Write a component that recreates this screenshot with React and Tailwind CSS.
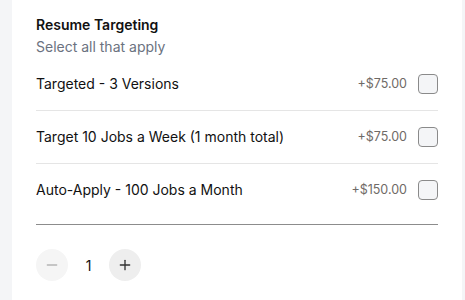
import { Minus, Plus } from "lucide-react";

const opciones = [
  { id: 1, nombre: "Targeted - 3 Versions", precio: "+$75.00" },
  { id: 2, nombre: "Target 10 Jobs a Week (1 month total)", precio: "+$75.00" },
  { id: 3, nombre: "Auto-Apply - 100 Jobs a Month", precio: "+$150.00" },
];

export default function App() {
  return (
    <div
      className="min-h-screen bg-[#f4f5f7] flex pl-3 pr-[3px]"
      style={{ fontFamily: "Inter, 'Noto Sans', sans-serif" }}
    >
      <div className="w-[450px] bg-white px-6 pt-[16px] min-h-[300px]">
        <h3 className="text-[14px] font-semibold leading-[18px] text-[#111]">Resume Targeting</h3>
        <p className="text-[14px] leading-[18px] mt-[4px] text-[#6b7280]">Select all that apply</p>

        <ul className="mt-[2px] pb-2 border-b border-[#8c8c8c]">
          {opciones.map((op, i) => (
            <li
              key={op.id}
              className={
                "flex items-center justify-between py-4 " +
                (i < opciones.length - 1 ? "border-b border-[#e5e5e5]" : "")
              }
            >
              <span className="text-[14px] leading-5 text-[#111]">{op.nombre}</span>
              <div className="flex items-center gap-[11px]">
                <span className="text-[12.5px] text-[#6f6a66]">{op.precio}</span>
                <span className="w-5 h-5 rounded-[4px] border border-[#8a8a8a] bg-[#f4f5f7]" />
              </div>
            </li>
          ))}
        </ul>

        <div className="flex items-center gap-[10px] mt-[24px]">
          <button className="w-8 h-8 rounded-full bg-[#f5f5f5] flex items-center justify-center text-[#b5b5b5]">
            <Minus size={16} strokeWidth={2} />
          </button>
          <span className="w-[21px] text-center text-[14px] text-[#111]">1</span>
          <button className="w-8 h-8 rounded-full bg-[#eeeeee] flex items-center justify-center text-[#333]">
            <Plus size={16} strokeWidth={2} />
          </button>
        </div>
      </div>
    </div>
  );
}
